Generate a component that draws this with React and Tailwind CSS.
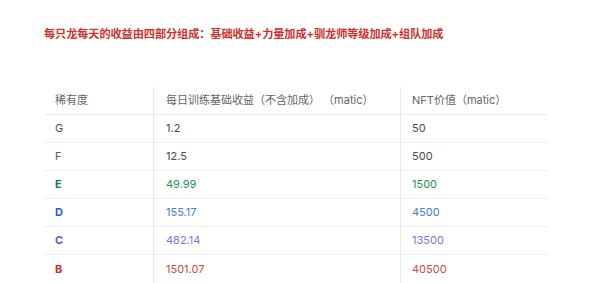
import React from 'react';

const rows = [
  { grade: 'G', daily: '1.2', nft: '50', letter: 'text-[#505050] font-normal', num: 'text-[#4a4a4a]' },
  { grade: 'F', daily: '12.5', nft: '500', letter: 'text-[#5c5c5c] font-normal', num: 'text-[#4a4a4a]' },
  { grade: 'E', daily: '49.99', nft: '1500', letter: 'text-[#177a3f] font-bold', num: 'text-[#2a8f55]' },
  { grade: 'D', daily: '155.17', nft: '4500', letter: 'text-[#2d5fc8] font-bold', num: 'text-[#4a7ad6]' },
  { grade: 'C', daily: '482.14', nft: '13500', letter: 'text-[#6a4fe0] font-bold', num: 'text-[#876ce6]' },
  { grade: 'B', daily: '1501.07', nft: '40500', letter: 'text-[#c9302f] font-bold', num: 'text-[#cf4848]' },
];

const App = () => {
  return (
    <div
      className="w-[600px] h-[283px] overflow-hidden bg-white"
      style={{ fontFamily: "Inter, 'Noto Sans CJK SC', sans-serif" }}
    >
      {/* ── Red intro line ── */}
      <p className="pt-[26px] pl-[44px] text-[11.2px] leading-4 font-bold text-[#d2302c] tracking-[-0.1px]">
        每只龙每天的收益由四部分组成：基础收益+力量加成+驯龙师等级加成+组队加成
      </p>

      {/* ── Rarity table ── */}
      <div className="mt-[45px] ml-[44px] w-[504px] text-[11px]">
        <div className="grid grid-cols-[110px_247px_147px] h-[28px] border-b border-[#e9ecef] text-[#666]">
          <div className="flex items-center pl-[11px] border-r border-[#e8eaed]">稀有度</div>
          <div className="flex items-center pl-[12px] border-r border-[#e8eaed] whitespace-pre">每日训练基础收益（不含加成） （matic）</div>
          <div className="flex items-center pl-[11px]">NFT价值（matic）</div>
        </div>
        {rows.map((r) => (
          <div
            key={r.grade}
            className="grid grid-cols-[110px_247px_147px] h-[28px] border-b border-[#eceef0] last:border-b-0"
          >
            <div className={`flex items-center pl-[11px] border-r border-[#e8eaed] ${r.letter}`}>{r.grade}</div>
            <div className={`flex items-center pl-[12px] border-r border-[#e8eaed] ${r.num}`}>{r.daily}</div>
            <div className={`flex items-center pl-[11px] ${r.num}`}>{r.nft}</div>
          </div>
        ))}
      </div>
    </div>
  );
};

export default App;
